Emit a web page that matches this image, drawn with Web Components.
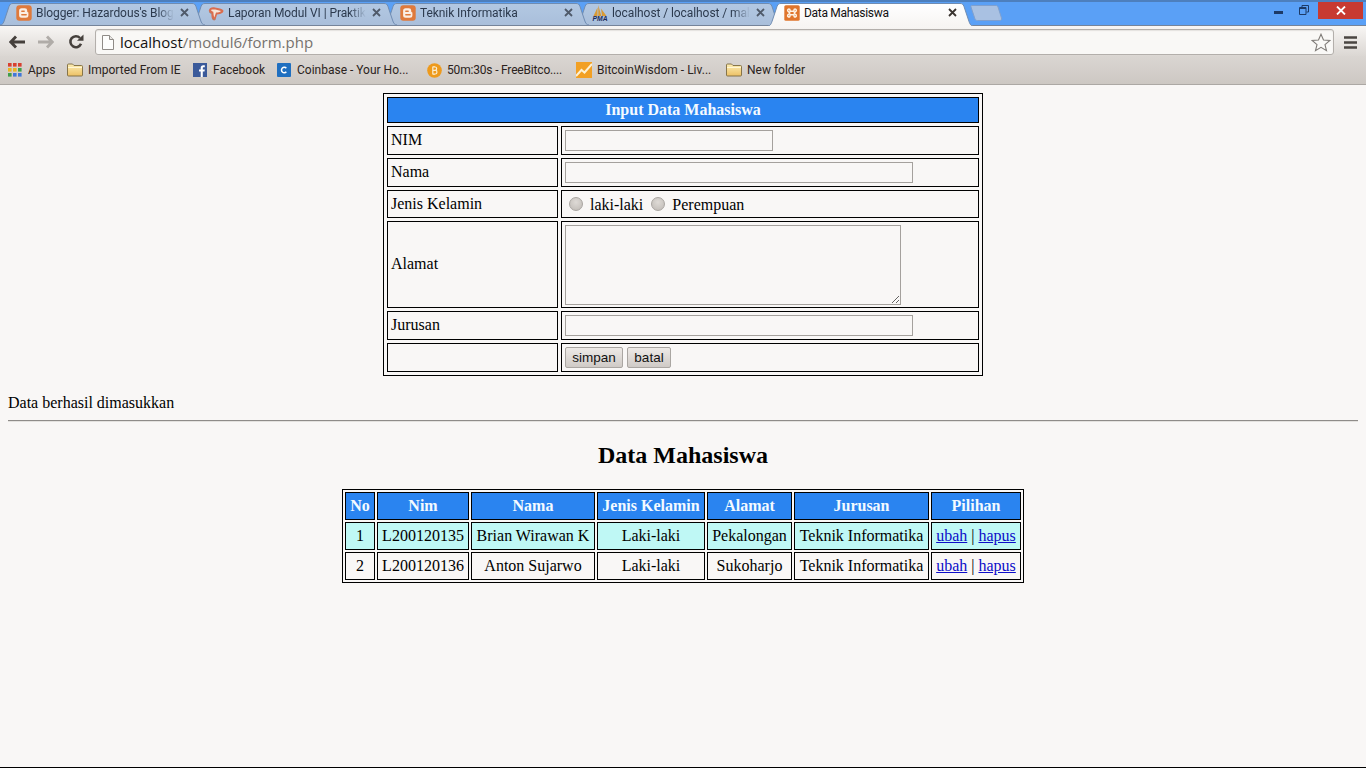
<!DOCTYPE html>
<html lang="en"><head><meta charset="utf-8"><title>Data Mahasiswa</title>
<style>
html,body{margin:0;padding:0;background:#f8f7f5;}
body{height:768px;overflow:hidden;display:flex;flex-direction:column;box-sizing:border-box;border-bottom:1px solid #000;}
</style></head><body>
<browser-chrome></browser-chrome>
<page-view>
  <mahasiswa-form></mahasiswa-form>
  <br>
  <span>Data berhasil dimasukkan</span>
  <hr-line></hr-line>
  <page-title>Data Mahasiswa</page-title>
  <mahasiswa-table></mahasiswa-table>
</page-view>
<script>
const ICONS={
blogger:`<svg viewBox="0 0 16 16" width="16" height="16"><rect x=".3" y=".3" width="15.400" height="15.400" rx="3" fill="#df7a3c"/><path d="M5.600 3.200h3.200a2.400 2.400 0 0 1 2.400 2.400v.9c0 .5.400.6.800.7.300.1.400.3.400.6v2.500a2.500 2.500 0 0 1-2.500 2.500H5.600a2.500 2.500 0 0 1-2.500-2.500V5.700a2.500 2.500 0 0 1 2.500-2.500z" fill="#fbeee4"/><path d="M5.800 6.200h2.400M5.800 9.700h4.400" stroke="#df7a3c" stroke-width="1.400" stroke-linecap="round"/></svg>`,
slides:`<svg viewBox="0 0 16 16" width="16" height="16"><path d="M.8 5.500C1.500 2.500 4 2 7 2.500c3.500.5 7 1.300 8.300 2.800.6 1.500-.8 3.200-3.300 3.700L9 9.600l-1.500 4.800c-.6 1.300-2.500 1.200-3.300-.5C3.300 12 3.500 9.800 3.300 8.500 2 8 .8 7 .8 5.500z" fill="#d96d4f"/><path d="M3 5C5 4 10 5 13 6c-1 1.300-3 1.500-5 1.600L6.300 12.500C5.500 11 5.600 8 5.300 6.800 4.500 6.500 3.500 6 3 5z" fill="#f6e6d8"/><path d="M1.200 7c.8 1 1.800 1.500 2.500 1.700M4.200 13.500c.8 1.200 2.400 1.500 3.300.7" stroke="#9a8678" stroke-width=".8" fill="none"/></svg>`,
pma:`<svg viewBox="0 0 16 16" width="16" height="16"><path d="M1.500 11 5.500 2.500V11zM6.300 11V0L9.300 11zM10 11 9 3.500 14.500 11z" fill="#d99a34"/><text x="8" y="15.800" font-family="Liberation Sans" font-size="6.800" font-style="italic" font-weight="700" text-anchor="middle" fill="#1d2c5a">PMA</text></svg>`,
xampp:`<svg viewBox="0 0 16 16" width="16" height="16"><rect x=".3" y=".3" width="15.400" height="15.400" rx="1.500" fill="#e0752c"/><path d="M6.200 6.200 5.800 4.400a1.300 1.300 0 0 0-2 1.600l2 2-2 2a1.300 1.300 0 0 0 2 1.600l.4-1.800h3.600l.4 1.800a1.300 1.300 0 0 0 2-1.600l-2-2 2-2a1.300 1.300 0 0 0-2-1.600l-.4 1.800z" fill="none" stroke="#fdf3e6" stroke-width="1.500"/></svg>`,
apps:`<svg viewBox="0 0 14 14" width="14" height="14">${[['#d8402f','#d8402f','#d8402f'],['#e9b422','#e9b422','#3f9e4a'],['#3f9e4a','#4177d9','#4177d9']].map((r,y)=>r.map((c,x)=>`<rect x="${x*5}" y="${y*5}" width="3.600" height="3.600" fill="${c}"/>`).join('')).join('')}</svg>`,
folder:`<svg viewBox="0 0 16 14" width="16" height="14"><defs><linearGradient id="f" x1="0" y1="0" x2="0" y2="1"><stop offset="0" stop-color="#fdeeb4"/><stop offset="1" stop-color="#ecc065"/></linearGradient></defs><path d="M1.500 1h4l1.500 1.500h7.500a1 1 0 0 1 1 1V12a1 1 0 0 1-1 1h-13a1 1 0 0 1-1-1V2a1 1 0 0 1 1-1z" fill="url(#f)" stroke="#7c6a3e" stroke-width=".9"/><path d="M1 4.500h14" stroke="#fff6d4" stroke-width="1"/></svg>`,
facebook:`<svg viewBox="0 0 14 14" width="14" height="14"><rect width="14" height="14" fill="#3b5a9a"/><path d="M9.800 14V8.500h1.700l.3-2.100h-2V5.200c0-.6.200-1 1-1h1V2.300c-.2 0-.8-.1-1.500-.1-1.600 0-2.600.9-2.600 2.700v1.500H6v2.100h1.700V14z" fill="#fff"/></svg>`,
coinbase:`<svg viewBox="0 0 14 14" width="14" height="14"><rect width="14" height="14" rx="1" fill="#1f6fc0"/><path d="M9.300 5.300A2.700 2.700 0 1 0 9.300 8.700" fill="none" stroke="#fff" stroke-width="1.500"/></svg>`,
bitcoin:`<svg viewBox="0 0 15 15" width="15" height="15"><circle cx="7.500" cy="7.500" r="7.300" fill="#ee9a1c"/><path d="M5.800 4h2.500c1.700 0 1.800 2.800.2 3.200 2 .3 1.900 3.800-.2 3.800H5.800zM5.800 7.400h2.600M7 3v1M7 11v1" fill="none" stroke="#fbeed2" stroke-width="1.200"/></svg>`,
wisdom:`<svg viewBox="0 0 16 16" width="16" height="16"><rect width="16" height="16" fill="#f2a024"/><path d="M0 14 5.500 8l3 2.500L16 2" fill="none" stroke="#fdf1d4" stroke-width="2"/></svg>`
};
class AppIcon extends HTMLElement{
  constructor(){super();this.attachShadow({mode:'open'}).innerHTML=`<style>:host{display:inline-flex;flex:none;line-height:0}</style>${ICONS[this.getAttribute('name')]||''}`;}
}
customElements.define('app-icon',AppIcon);

class BrowserTab extends HTMLElement{
  constructor(){super();const a=this.hasAttribute('active');
  const z=this.getAttribute('z')||1;
  this.attachShadow({mode:'open'}).innerHTML=`<style>
  :host{display:block;position:relative;flex:none;width:205px;height:${a?23:22}px;margin-left:-13px;z-index:${z};font:12px/20px Roboto,sans-serif;color:${a?'#111':'#2c3a4e'};}
  :host(:first-child){margin-left:0}
  svg.bg{position:absolute;left:0;top:0;width:205px;height:100%;}
  .row{position:relative;display:flex;align-items:center;height:20px;padding-left:16px;}
  .label{margin-left:4px;width:${a?140:138}px;white-space:nowrap;overflow:hidden;letter-spacing:${a?'-.3px':'-.08px'};${a?'':'-webkit-mask-image:linear-gradient(90deg,#000 88%,transparent 100%);mask-image:linear-gradient(90deg,#000 88%,transparent 100%);'}}
  .x{position:absolute;left:180px;top:5px;width:9px;height:9px}
  </style>
  <svg class="bg" viewBox="0 0 205 ${a?23:22}" preserveAspectRatio="none"><defs><linearGradient id="g" x1="0" y1="0" x2="0" y2="1"><stop offset="0" stop-color="${a?'#ffffff':'#b3c8e2'}"/><stop offset="1" stop-color="${a?'#f7f5f3':'#a9bfdb'}"/></linearGradient></defs>
  <path d="M0 ${a?23:22}C2.500 ${a?23:22} 3.500 20 4.500 17L9 3.500C10 1 11 .5 13 .5H192C194 .5 195 1 196 3.500L200.500 17C201.500 20 202.500 ${a?23:22} 205 ${a?23:22}" fill="url(#g)" stroke="#6f8cb2" stroke-width="1"/></svg>
  <div class="row"><app-icon name="${this.getAttribute('icon')}"></app-icon><span class="label"><slot></slot></span>
  <svg class="x" viewBox="0 0 9 9"><path d="M1 1l7 7M8 1L1 8" stroke="${a?'#3a3430':'#4f5a6a'}" stroke-width="1.800"/></svg></div>`;}
}
customElements.define('browser-tab',BrowserTab);

class BookmarkItem extends HTMLElement{
  constructor(){super();this.attachShadow({mode:'open'}).innerHTML=`<style>
  :host{display:flex;align-items:center;flex:none;width:var(--w,auto);font:12px/16px Roboto,sans-serif;letter-spacing:var(--s,0);color:#2b2320;white-space:nowrap}
  .i{flex:none;width:var(--i,20px);display:flex;align-items:center}
  </style><span class="i"><app-icon name="${this.getAttribute('icon')}"></app-icon></span><span><slot></slot></span>`;}
}
customElements.define('bookmark-item',BookmarkItem);

class BrowserChrome extends HTMLElement{
  constructor(){super();this.attachShadow({mode:'open'}).innerHTML=`<style>
  :host{display:block;flex:none;height:85px;box-sizing:border-box;position:relative}
  .strip{height:25px;box-sizing:border-box;background:#5aa0f6;border-top:2px solid #4d7fbd;padding-top:1px;display:flex;align-items:flex-start;position:relative;}
  .newtab{flex:none;margin:2px 0 0 -3px;width:32px;height:16px;line-height:0}
  .win{margin-left:auto;display:flex;align-items:flex-start;margin-top:-1px;margin-right:3px}
  .win svg{display:block}
  .min{margin:9px 16px 0 0}.res{margin:3px 9px 0 0}
  .close{width:45px;height:17px;background:#c73a31;display:flex;align-items:center;justify-content:center}
  .tool{height:31px;box-sizing:border-box;border-top:1px solid #75849a;padding-top:2px;display:flex;align-items:center;background:linear-gradient(#f8f6f4,#dbd7d3);position:relative;z-index:0}
  .nav{flex:none;line-height:0}
  .omni{flex:none;width:1239px;height:26px;box-sizing:border-box;margin-left:11px;border:1px solid #b3afab;border-radius:3px;background:#f9f8f6;display:flex;align-items:center;padding-left:6px;font:15px/20px "Open Sans",sans-serif;color:#76726e;box-shadow:inset 0 1px 1px #e4e2df}
  .omni b{font-weight:400;color:#111}
  .omni .doc{margin-right:6px;flex:none}
  .omni .star{margin-left:auto;margin-right:2px;flex:none}
  .book{height:29px;box-sizing:border-box;border-bottom:1px solid #aca8a4;background:linear-gradient(#dad6d2,#cdc8c3);display:flex;align-items:center;padding-left:8px}
  </style>
  <div class="strip">
    <browser-tab icon="blogger" z="5">Blogger: Hazardous's Blog</browser-tab>
    <browser-tab icon="slides" z="4">Laporan Modul VI | Praktikum</browser-tab>
    <browser-tab icon="blogger" z="3">Teknik Informatika</browser-tab>
    <browser-tab icon="pma" z="2">localhost / localhost / mahasiswa</browser-tab>
    <browser-tab icon="xampp" z="6" active>Data Mahasiswa</browser-tab>
    <svg class="newtab" viewBox="0 0 32 16"><path d="M2 .5H26C27 .5 27.500 1 28 2L31.500 13C32 14.500 31 15.500 30 15.500H7.500C6 15.500 5.500 15 5 14L1 2C.7 1 1 .5 2 .5Z" fill="#a9c1e2" stroke="#7fa0cf"/></svg>
    <div class="win">
      <svg class="min" width="9" height="3"><rect width="9" height="3" fill="#1d3a66"/></svg>
      <svg class="res" width="10" height="10" viewBox="0 0 10 10"><path d="M3 2.500V.5H9.500V7H7.500M.5 2.500H7V9.500H.5Z" fill="none" stroke="#1d3a66" stroke-width="1"/><path d="M.5 3.500H7" stroke="#1d3a66"/></svg>
      <div class="close"><svg width="10" height="9" viewBox="0 0 10 9"><path d="M1 .5l8 8M9 .5l-8 8" stroke="#fff" stroke-width="1.800"/></svg></div>
    </div>
  </div>
  <div class="tool">
    <svg class="nav" style="margin-left:9px" width="16" height="14" viewBox="0 0 16 14"><path d="M7 1.500 1.800 7 7 12.500M2 7h14" fill="none" stroke="#45403c" stroke-width="2.800"/></svg>
    <svg class="nav" style="margin-left:13px" width="16" height="14" viewBox="0 0 16 14"><path d="M9 1.500 14.200 7 9 12.500M14 7H0" fill="none" stroke="#b0aca8" stroke-width="2.800"/></svg>
    <svg class="nav" style="margin-left:14px" width="16" height="16" viewBox="0 0 16 16"><path d="M13 9.800A5.500 5.500 0 1 1 12 4" fill="none" stroke="#45403c" stroke-width="2.600"/><path d="M9 6.800h6.500V.5z" fill="#45403c"/></svg>
    <div class="omni">
      <svg class="doc" width="12" height="15" viewBox="0 0 12 15"><path d="M.5.500H7.500L11.500 4.500V14.500H.5Z" fill="#fdfdfc" stroke="#8f8b87"/><path d="M7.500 .5V4.500H11.500" fill="#e8e6e3" stroke="#8f8b87"/></svg>
      <span><b>localhost</b>/modul6/form.php</span>
      <svg class="star" width="20" height="19" viewBox="0 0 20 19"><path d="M10 1.200 12.500 7l6.300.5-4.800 4.100 1.500 6.100L10 14.400 4.500 17.700 6 11.600 1.200 7.500 7.500 7Z" fill="#faf9f7" stroke="#7f7b77" stroke-width="1.100"/></svg>
    </div>
    <svg class="nav" style="margin-left:10px" width="13" height="13" viewBox="0 0 13 13"><path d="M0 1.500h13M0 6.500h13M0 11.500h13" stroke="#4a4541" stroke-width="2.600"/></svg>
  </div>
  <div class="book">
    <bookmark-item icon="apps" style="--w:59px">Apps</bookmark-item>
    <bookmark-item icon="folder" style="--w:126px;--i:21px">Imported From IE</bookmark-item>
    <bookmark-item icon="facebook" style="--w:84px">Facebook</bookmark-item>
    <bookmark-item icon="coinbase" style="--w:150px">Coinbase - Your Ho...</bookmark-item>
    <bookmark-item icon="bitcoin" style="--w:149px;--s:-.18px">50m:30s - FreeBitco....</bookmark-item>
    <bookmark-item icon="wisdom" style="--w:150px;--i:21px">BitcoinWisdom - Liv...</bookmark-item>
    <bookmark-item icon="folder" style="--i:21px">New folder</bookmark-item>
  </div>`;}
}
customElements.define('browser-chrome',BrowserChrome);

class PageView extends HTMLElement{
  constructor(){super();this.attachShadow({mode:'open'}).innerHTML=`<style>
  :host{display:block;flex:1;padding:8px;font:16px/18px "Liberation Serif",serif;color:#000;background:#f9f7f6}
  </style><slot></slot>`;}
}
customElements.define('page-view',PageView);

class HrLine extends HTMLElement{
  constructor(){super();this.attachShadow({mode:'open'}).innerHTML=`<style>
  :host{display:block;margin:8px 0;height:2px;box-sizing:border-box;border-top:1px solid #8f8c89;border-bottom:1px solid #e4e2df}
  </style>`;}
}
customElements.define('hr-line',HrLine);

class PageTitle extends HTMLElement{
  constructor(){super();this.attachShadow({mode:'open'}).innerHTML=`<style>
  :host{display:block;margin:19.920px 0;text-align:center;font:bold 24px/27px "Liberation Serif",serif}
  </style><slot></slot>`;}
}
customElements.define('page-title',PageTitle);

const TABLE_CSS=`
 table{margin:0 auto;border-collapse:separate;table-layout:fixed;border:1px solid #000;font:16px/18px "Liberation Serif",serif;color:#000}
 td,th{box-sizing:border-box;border:1px solid #000;padding:3px;}
 th{background:#2a84f0;color:#f4faff;font-weight:700;text-align:center}
`;
class MahasiswaForm extends HTMLElement{
  constructor(){super();this.attachShadow({mode:'open'}).innerHTML=`<style>
  :host{display:block}
  ${TABLE_CSS}
  table{width:600px;border-spacing:3px}
  td.l{padding-top:2px;padding-bottom:4px}
  td.ta{padding-bottom:2px}
  input.t,textarea{display:block;box-sizing:border-box;margin:0;padding:1px 2px;border:1px solid #a5a19d;background:#f9f7f6;border-radius:0;outline:none;font:13.330px "Liberation Sans",sans-serif}
  input.t{height:21px}
  textarea{width:336px;height:80px;resize:both}
  .radios{display:flex;align-items:center;height:20px;padding-left:4px}
  .radio{flex:none;width:14px;height:14px;border-radius:50%;box-sizing:border-box;border:1px solid #a9a5a1;background:radial-gradient(circle at 50% 35%,#dedad6,#bfbab5);margin-top:-2px}
  .radios span{margin:1px 8px 0 7px}
  .btns{display:flex;gap:4px}
  button{box-sizing:border-box;height:21px;margin:0;padding:0;border:1px solid #aaa6a2;border-radius:2px;background:linear-gradient(#eeeae7,#cfcac6);font:13.500px "Liberation Sans",sans-serif;color:#111}
  </style>
  <table><colgroup><col style="width:171px"><col style="width:418px"></colgroup>
  <tr><th colspan="2" style="height:26px">Input Data Mahasiswa</th></tr>
  <tr><td class="l" style="height:29px">NIM</td><td><input class="t" style="width:208px"></td></tr>
  <tr><td class="l" style="height:29px">Nama</td><td><input class="t" style="width:348px"></td></tr>
  <tr><td style="height:28px">Jenis Kelamin</td><td style="padding-bottom:2px"><div class="radios"><i class="radio"></i><span>laki-laki</span><i class="radio"></i><span>Perempuan</span></div></td></tr>
  <tr><td class="l" style="height:87px">Alamat</td><td class="ta"><textarea></textarea></td></tr>
  <tr><td class="l" style="height:29px">Jurusan</td><td><input class="t" style="width:348px"></td></tr>
  <tr><td style="height:29px"></td><td><div class="btns"><button style="width:58px">simpan</button><button style="width:44px">batal</button></div></td></tr>
  </table>`;}
}
customElements.define('mahasiswa-form',MahasiswaForm);

class MahasiswaTable extends HTMLElement{
  constructor(){super();
  const rows=[['1','L200120135','Brian Wirawan K','Laki-laki','Pekalongan','Teknik Informatika'],['2','L200120136','Anton Sujarwo','Laki-laki','Sukoharjo','Teknik Informatika']];
  const widths=[30,92,124,108,85,135,90];
  const heads=['No','Nim','Nama','Jenis Kelamin','Alamat','Jurusan','Pilihan'];
  this.attachShadow({mode:'open'}).innerHTML=`<style>
  :host{display:block}
  ${TABLE_CSS}
  table{width:682px;border-spacing:2px}
  td,th{height:28px;padding:0;white-space:nowrap;text-align:center}
  tr.a td{background:#bff8f5}
  a{color:#0c0cc8;text-decoration:underline}
  </style>
  <table><colgroup>${widths.map(w=>`<col style="width:${w}px">`).join('')}</colgroup>
  <tr>${heads.map(h=>`<th>${h}</th>`).join('')}</tr>
  ${rows.map((r,i)=>`<tr class="${i==0?'a':''}">${r.map(c=>`<td>${c}</td>`).join('')}<td><a href="#">ubah</a> | <a href="#">hapus</a></td></tr>`).join('')}
  </table>`;}
}
customElements.define('mahasiswa-table',MahasiswaTable);
</script>
</body></html>
